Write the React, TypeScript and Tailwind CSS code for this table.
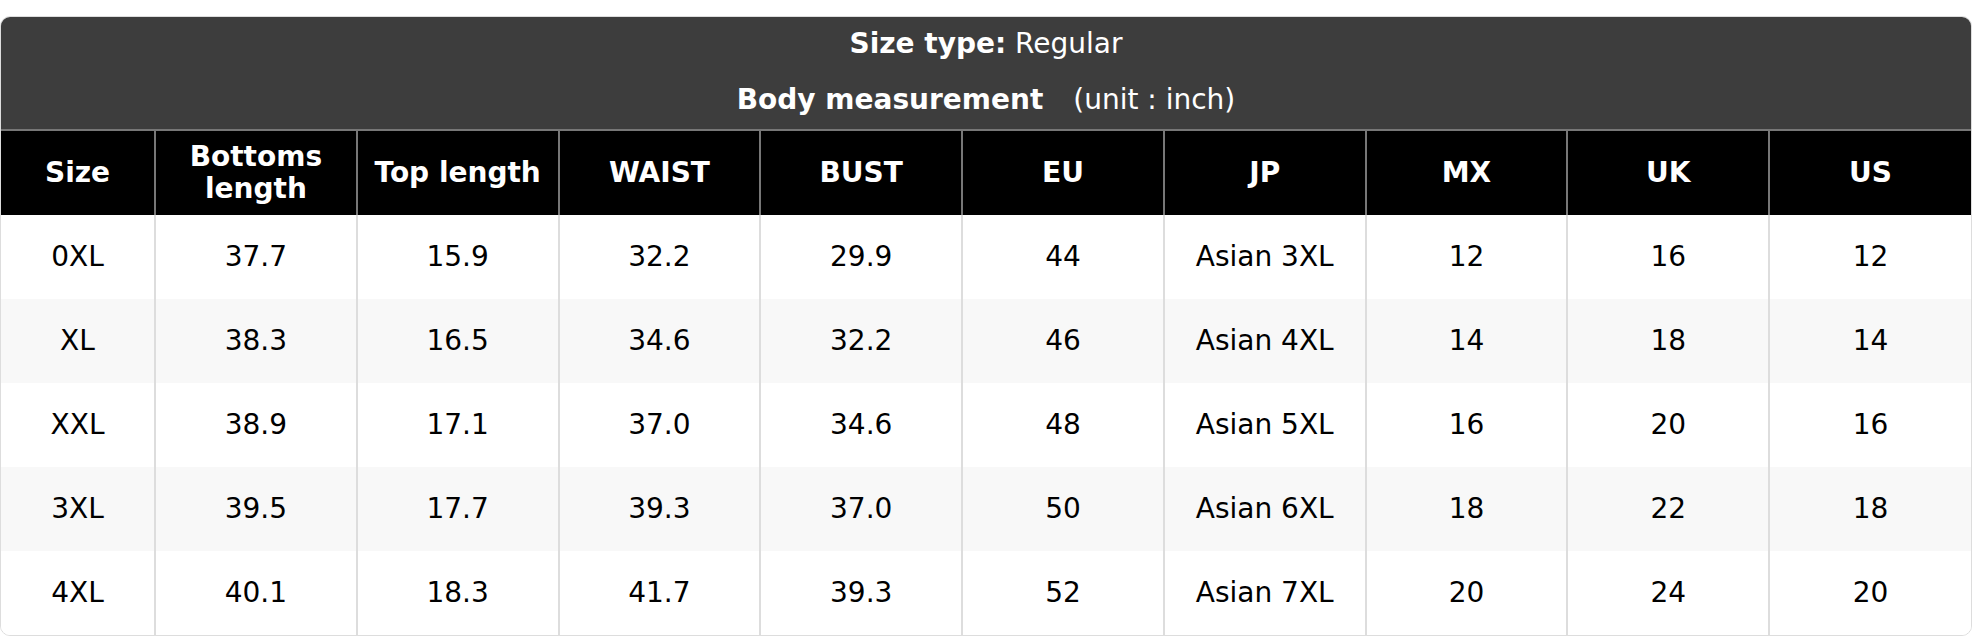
const columns = ["Size", "Bottoms length", "Top length", "WAIST", "BUST", "EU", "JP", "MX", "UK", "US"];

const rows = [
  ["0XL", "37.7", "15.9", "32.2", "29.9", "44", "Asian 3XL", "12", "16", "12"],
  ["XL", "38.3", "16.5", "34.6", "32.2", "46", "Asian 4XL", "14", "18", "14"],
  ["XXL", "38.9", "17.1", "37.0", "34.6", "48", "Asian 5XL", "16", "20", "16"],
  ["3XL", "39.5", "17.7", "39.3", "37.0", "50", "Asian 6XL", "18", "22", "18"],
  ["4XL", "40.1", "18.3", "41.7", "39.3", "52", "Asian 7XL", "20", "24", "20"],
];

export default function App() {
  return (
    <div className="bg-white pt-4 font-['DejaVu_Sans',sans-serif]">
      <div className="overflow-hidden rounded-[10px] border border-[#dddddd]">
        {/* title block */}
        <div className="flex flex-col items-center bg-[#3d3d3d] pt-[11px] pb-[13px] text-[28px] leading-[32px] text-white">
          <div>
            <span className="font-bold">Size type:</span> Regular
          </div>
          <div className="mt-6">
            <span className="font-bold">Body measurement</span>
            <span className="ml-[30px]">(unit : inch)</span>
          </div>
        </div>

        <table className="w-full table-fixed border-collapse text-center">
          <colgroup>
            <col className="w-[154px]" />
            {columns.slice(1).map((c) => (
              <col key={c} />
            ))}
          </colgroup>
          <thead>
            <tr className="bg-black text-white">
              {columns.map((c, i) => (
                <th
                  key={c}
                  className={
                    "border-t-2 border-[#777777] px-2 py-[10px] text-[28px] font-bold leading-[32px] " +
                    (i === 0 ? "border-r-2" : i === columns.length - 1 ? "border-l-2" : "border-x-2")
                  }
                >
                  {c}
                </th>
              ))}
            </tr>
          </thead>
          <tbody>
            {rows.map((r, ri) => (
              <tr key={r[0]} className={ri % 2 === 1 ? "bg-[#f8f8f8]" : "bg-white"}>
                {r.map((v, i) => (
                  <td
                    key={i}
                    className={
                      "border-[#dddddd] px-2 py-6 text-[28px] leading-[36px] text-black " +
                      (i === 0 ? "border-r-2" : i === r.length - 1 ? "border-l-2" : "border-x-2")
                    }
                  >
                    {v}
                  </td>
                ))}
              </tr>
            ))}
          </tbody>
        </table>
      </div>
    </div>
  );
}
